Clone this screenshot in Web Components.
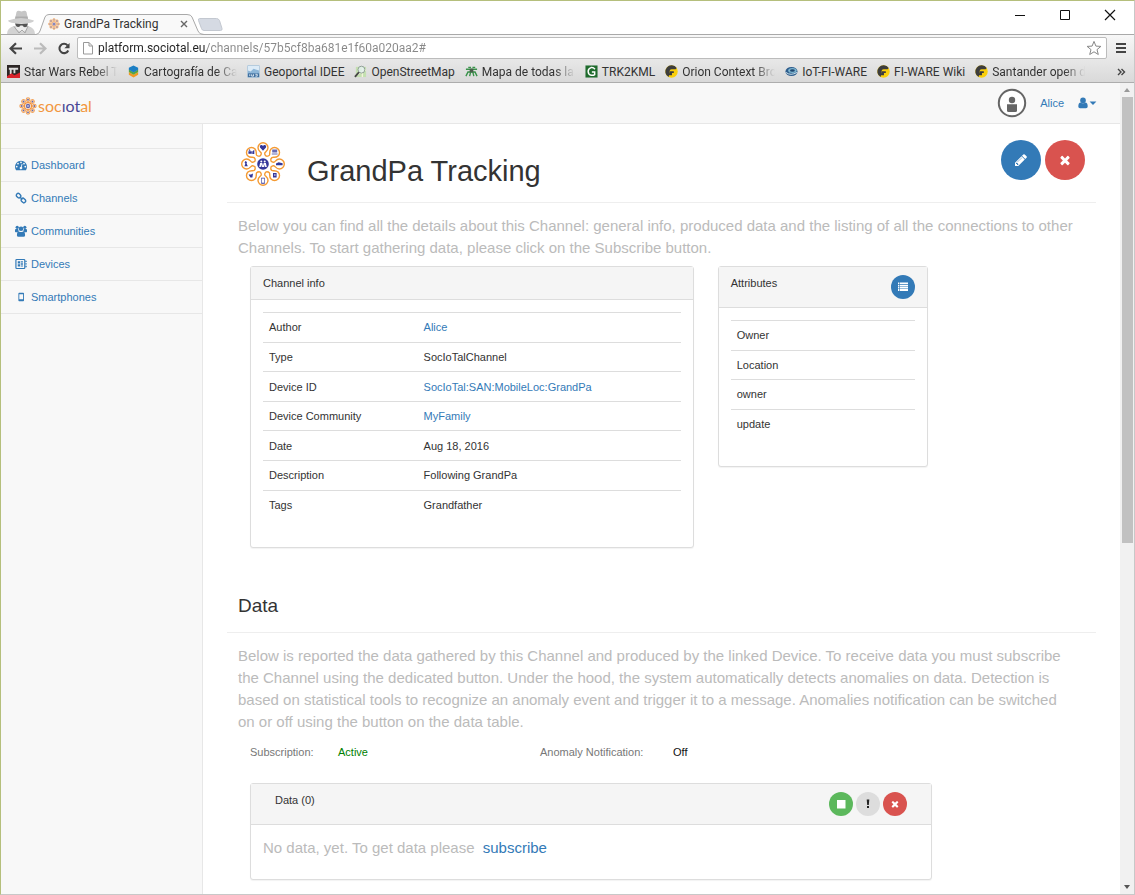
<!DOCTYPE html>
<html lang="en">
<head>
<meta charset="utf-8">
<meta name="viewport" content="width=device-width, initial-scale=1">
<title>GrandPa Tracking</title>
<style>
html, body { margin: 0; height: 100%; }
body { font-family: "Liberation Sans", Arial, sans-serif; font-size: 11px; line-height: 16px; color: #333; background: #fff; }
</style>
</head>
<body>
<browser-window>
  <channel-app></channel-app>
</browser-window>

<script>
const define = (name, html, setup) => {
  const template = document.createElement('template');
  template.innerHTML = html;
  customElements.define(name, class extends HTMLElement {
    constructor() {
      super();
      this.attachShadow({ mode: 'open' });
    }
    connectedCallback() {
      if (this.shadowRoot.childNodes.length) return;
      this.shadowRoot.append(template.content.cloneNode(true));
      if (setup) setup(this, this.shadowRoot);
    }
  });
};

const angles = [0, 45, 90, 135, 180, 225, 270, 315];
const petal = 'M-3.2-7.7C-2.2-8.6-1.500-9.400-1.700-10.800C-2-12.200-5-13.200-5-16.300A5 5 0 0 1 5-16.300C5-13.200 2-12.200 1.700-10.800C1.500-9.400 2.200-8.600 3.200-7.700';

const ICONS = {
  flower: ['-22 -22 44 44', `<g fill="none" stroke="#f49a33" stroke-width="1.400">${angles.map(a => `<path transform="rotate(${a})" d="${petal}"/>`).join('')}</g>
    <g fill="#34379a"><circle r="5.800"/>
    <path d="M0-13.200l-3-3.200q-.8-2 .9-2.600 1.400-.3 2.100 1 .7-1.300 2.100-1 1.700.6.9 2.600z"/>
    <path d="M-14.600-12.800h3.400v2.600h-3.400zM-10.700-12.400l2-1.800v4.200h-2zM-13.400-15l1 1.700h-2z"/>
    <path d="M9.200-14.400h5v3h-5zM8.800-10.600h5.800v1.200H8.800z" fill-opacity=".75"/>
    <path d="M13-.6l2.600-1.200 4 1v2H13z"/>
    <path d="M-17.600-3l1.600 1-.4 1.600 1.200 2.600h-3.400l1-2.400-.8-1z"/>
    <path d="M-14.400 10.400h2.400l2-1-.6 4h-2z"/>
    <path d="M10 9h3.600v4.400H10zM11 10.400v1h1.600v-1z" fill-rule="evenodd"/>
    <path d="M-1.800 13.800h3.600v6h-3.600zM-1.200 14.600v4.200h2.400v-4.200z" fill-rule="evenodd"/></g>
    <g fill="#fff"><circle cx="-1.700" cy="-2.600" r="1"/><circle cx="1.700" cy="-2.600" r="1"/><path d="M-3.800 3l.9-4h2.200L0 2l.7-3h2.200l.9 4H2.200L1.700.6 1.200 3h-2.400L-1.700.6-2.200 3z"/></g>`],
  mini: ['-22 -22 44 44', `<g fill="#fde3c3" stroke="#f2a35b" stroke-width="2.500">${angles.map(a => `<circle transform="rotate(${a})" cy="-15.500" r="4.500"/>`).join('')}</g>
    <circle r="8.500" fill="#fff" stroke="#f2913b" stroke-width="3"/><g fill="#6a66a6"><circle r="5.500"/>${angles.map(a => `<circle transform="rotate(${a})" cy="-15.500" r="2.200"/>`).join('')}</g><path d="M-3 0h6" stroke="#fff" stroke-width="2"/>`],
  dashboard: ['0 0 1792 1792', '<path d="M384 1152q0-53-37.500-90.500t-90.500-37.500-90.500 37.500-37.500 90.500 37.500 90.500 90.500 37.500 90.500-37.500 37.500-90.500zm192-448q0-53-37.500-90.500t-90.500-37.500-90.500 37.500-37.500 90.500 37.500 90.500 90.500 37.500 90.500-37.500 37.500-90.500zm428 481l101-382q6-26-7.500-48.500t-38.500-29.500-48 6.500-30 39.500l-101 382q-60 5-107 43.500t-63 98.500q-20 77 20 146t117 89 146-20 89-117q16-60-6-117t-72-91zm660-33q0-53-37.500-90.500t-90.500-37.500-90.500 37.500-37.500 90.500 37.500 90.500 90.500 37.500 90.500-37.500 37.500-90.500zm-640-640q0-53-37.500-90.500t-90.500-37.500-90.500 37.500-37.500 90.500 37.500 90.500 90.500 37.500 90.500-37.500 37.500-90.500zm448 192q0-53-37.500-90.500t-90.500-37.500-90.500 37.500-37.500 90.500 37.500 90.500 90.500 37.500 90.500-37.500 37.500-90.500zm320 448q0 261-141 483-19 29-54 29h-1402q-35 0-54-29-141-221-141-483 0-182 71-348t191-286 286-191 348-71 348 71 286 191 191 286 71 348z"/>'],
  link: ['0 0 12 12', '<g fill="none" stroke="currentColor" stroke-width="1.400"><rect x="-2.400" y="-1.800" width="4.800" height="3.600" rx="1.600" transform="translate(3.600 3.700) rotate(45)"/><rect x="-2.400" y="-1.800" width="4.800" height="3.600" rx="1.600" transform="translate(8.400 8.500) rotate(45)"/><path d="M4.700 4.800l2.600 2.600"/></g>'],
  users: ['0 0 12 12', '<circle cx="2.200" cy="2.300" r="1.600"/><circle cx="9.800" cy="2.300" r="1.600"/><circle cx="6" cy="3.800" r="2.300"/><path d="M0 6.600V5.200Q0 4.100 .9 4.100H3.100Q3.200 5.500 4 6.300 3 6.400 2.500 7.300H.6Q0 7.300 0 6.600zM12 6.600V5.200Q12 4.100 11.100 4.100H8.900Q8.800 5.500 8 6.300 9 6.400 9.500 7.300H11.400Q12 7.300 12 6.600zM1.900 10.200Q1.900 6.400 3.900 6.400 6 7.800 8.100 6.400 10.100 6.400 10.100 10.200 10.100 11.700 8.500 11.700H3.500Q1.900 11.700 1.900 10.200z"/>'],
  device: ['0 0 13 12', '<rect x="1" y="1.100" width="9.600" height="9.800" rx=".8" fill="none" stroke="currentColor" stroke-width="1.300"/><path d="M11.200 2.400h1.500v1.400h-1.500zM11.200 5.200h1.500v1.400h-1.500zM11.200 8h1.500v1.400h-1.500zM3 3h2.500v2.400H3zM6.200 3h2.400v1.500H6.200zM3 6.200h2.500v2.600H3zM6.200 5.300h2.400v1.600H6.200zM6.200 7.500h2.400v1.300H6.200z"/>'],
  phone: ['0 0 12 12', '<path fill-rule="evenodd" d="M4.200 1.800h4q.8 0 .8.800v6.900q0 .8-.8.800h-4q-.8 0-.8-.8V2.600q0-.8.8-.8zM4.300 3.300v5h3.800v-5z"/>'],
  user: ['0 0 12 12', '<circle cx="6" cy="3.400" r="2.800"/><path d="M1.300 9.400q0-4 2.500-4 2.200 1.700 4.400 0 2.500 0 2.500 4 0 1.800-1.700 1.800H3q-1.700 0-1.700-1.800z"/>'],
  caret: ['0 0 8 8', '<path d="M.6 2.500h6.800L4 6z"/>'],
  avatar: ['0 0 30 30', '<circle cx="15" cy="15" r="13.200" fill="#fff" stroke="currentColor" stroke-width="2"/><circle cx="15" cy="12" r="3.200"/><path d="M10 16.200h10v6.300q0 1.500-1.500 1.500h-7q-1.500 0-1.500-1.500z"/>'],
  pencil: ['0 0 1792 1792', '<path d="M491 1536l91-91-235-235-91 91v107h128v128h107zm523-928q0-22-22-22-10 0-17 7l-542 542q-7 7-7 17 0 22 22 22 10 0 17-7l542-542q7-7 7-17zm-54-192l416 416-832 832h-416v-416zm683 96q0 53-37 90l-166 166-416-416 166-165q36-38 90-38 53 0 91 38l235 234q37 39 37 91z"/>'],
  times: ['0 0 1792 1792', '<path d="M1490 1322q0 40-28 68l-136 136q-28 28-68 28t-68-28l-294-294-294 294q-28 28-68 28t-68-28l-136-136q-28-28-28-68t28-68l294-294-294-294q-28-28-28-68t28-68l136-136q28-28 68-28t68 28l294 294 294-294q28-28 68-28t68 28l136 136q28 28 28 68t-28 68l-294 294 294 294q28 28 28 68z"/>'],
  list: ['0 0 10 10', '<path d="M0 .5h1.400v1.800H0zM2 .5h8v1.800H2zM0 2.900h1.400v1.500H0zM2 2.900h8v1.500H2zM0 5h1.400v1.500H0zM2 5h8v1.500H2zM0 7.100h1.400v1.800H0zM2 7.100h8v1.800H2z"/>'],
  stop: ['0 0 10 10', '<path d="M1 1h8.500v8.500H1z"/>'],
  alert: ['0 0 10 10', '<path d="M3.700.5h2.600L5.800 6H4.200zM4 7h2v2H4z"/>'],
  back: ['0 0 14 12', '<path d="M7 .8L1.600 6 7 11.200M2 6h11" fill="none" stroke="currentColor" stroke-width="2.200"/>'],
  forward: ['0 0 14 12', '<path d="M7 .8L12.400 6 7 11.200M12 6H1" fill="none" stroke="currentColor" stroke-width="2.200"/>'],
  reload: ['0 0 14 14', '<path d="M11.600 9.200A5 5 0 1 1 10.800 3.600" fill="none" stroke="currentColor" stroke-width="2.200"/><path d="M13 1v5.600H7.400z"/>'],
  page: ['0 0 12 14', '<path d="M1.500 1.500h5.500l3.500 3.500v8h-9zM7 1.500V5h3.500" fill="#fff" stroke="currentColor"/>'],
  star: ['0 0 16 16', '<path d="M8 1.400l1.900 4.700 5 .3-3.900 3.200 1.300 4.900L8 11.800l-4.300 2.700L5 9.600 1.100 6.400l5-.3z" fill="none" stroke="currentColor"/>'],
  menu: ['0 0 12 12', '<path d="M1 1h10v2H1zM1 5h10v2H1zM1 9h10v2H1z"/>'],
  close: ['0 0 8 8', '<path d="M1 1l6 6M7 1L1 7" stroke="currentColor" stroke-width="1.400"/>'],
  more: ['0 0 8 8', '<path d="M1 1l3 3-3 3M4.500 1l3 3-3 3" fill="none" stroke="currentColor" stroke-width="1.400"/>'],
  min: ['0 0 12 12', '<path d="M1 6h10v1H1z"/>'],
  max: ['0 0 12 12', '<path d="M1.500 1.500h9v9h-9z" fill="none" stroke="currentColor"/>'],
  quit: ['0 0 12 12', '<path d="M1 1l10 10M11 1L1 11" stroke="currentColor" stroke-width="1.200"/>'],
  up: ['0 0 8 8', '<path d="M1 6l3-4 3 4z"/>'],
  down: ['0 0 8 8', '<path d="M1 2h6L4 6z"/>'],
  spy: ['0 0 30 24', '<path d="M1 24q0-6 7-8h14q7 2 7 8z" fill="#d3d3d3"/><path d="M9 12h13l-1 7q-5 5-11 0z" fill="#ececec"/><path d="M9 9l1.500-7q1-2 5-.6 4-1.600 5 .6L22 9z" fill="#c6c6c6"/><path d="M9.500 6.500h12L22 9H9z" fill="#adadad"/><path d="M2 10.500q13-5 26 0 0 3-13 3T2 10.500z" fill="#cfcfcf"/><path d="M9 13.500q6 .8 13 0l-1 3q-3 1.800-4.500-1h-2q-2 2.800-4.500.6z" fill="#555"/><path d="M8 16.500l5 6.500 3-3 3 3 3-7" fill="none" stroke="#a8a8a8"/>'],
  starwars: ['0 0 14 14', '<path fill="#2c2625" d="M0 0h14v14H0z"/><path d="M2 3h10v2H9v4H7V5H5v5H3V5H2z" fill="#ddd"/><path d="M0 12l5-3 3 2 6-3v6H0z" fill="#d9222b"/>'],
  layers: ['0 0 14 14', '<path d="M2 7.500l5 3 5-3v3l-5 3-5-3z" fill="#f29a22"/><path d="M2 4.800l5 3 5-3v2.700l-5 3-5-3z" fill="#5ca63c"/><path d="M2 3l5-2.500L12 3v2L7 8 2 5z" fill="#1c7fc4"/>'],
  idee: ['0 0 14 14', '<path fill="#8db6d8" d="M.5.5h13v13H.5z"/><path d="M1 1h12v5l-6-2-3 3-3-1z" fill="#dcebf7"/><path d="M1 9h12v4H1z" fill="#3f6e9e"/><path d="M3 10v2M5 10v2h2v-2M9 10h2v2H9" stroke="#dfeaf4" fill="none"/>'],
  osm: ['0 0 14 14', '<path fill="#c4e0b1" d="M2 2h11v11H2z"/><path d="M2 11l11-6M9 13V3" stroke="#f3f4da" stroke-width="1.500"/><circle cx="8" cy="5" r="3.700" fill="#e4f1f0" fill-opacity=".8" stroke="#8b9a92"/><path d="M5.300 7.800L1 12.800" stroke="#444" stroke-width="2"/>'],
  tree: ['0 0 14 14', '<path d="M1 4.500h12M3.500 2.500h3M8 2.500h3M2.500 7.500h9M3 8L1 12M6 8l-1 4M8.500 8l1 4M11 8l2 4" fill="none" stroke="#39934a" stroke-width="1.500"/><path d="M5 4h4v4H5z" fill="#4a5d4b"/>'],
  letterg: ['0 0 14 14', '<path fill="#1f6b2d" d="M.5.5h13v13H.5z"/><path d="M10.700 4.500Q9 2.300 6.500 2.800 3.300 3.700 3.400 7t3.400 4.100q2.100.3 3.600-.8V7.600H7.400" fill="none" stroke="#fff" stroke-width="1.600"/>'],
  fiware: ['0 0 14 14', '<circle cx="7" cy="7" r="6.700" fill="#f9cf0c"/><path d="M4 13A6.700 6.700 0 1 1 12.600 3.300L11.500 4.500H7Q5 4.500 5 6.500z" fill="#3c3c3c"/><path d="M5 6.600h4.500v2H7.500V11H4z" fill="#3c3c3c"/>'],
  iot: ['0 0 14 14', '<ellipse cx="7" cy="7" rx="6.500" ry="4.800" fill="#2d5c8c"/><ellipse cx="8" cy="6" rx="4.600" ry="2.700" fill="#7db5d0"/><ellipse cx="8" cy="6" rx="2.600" ry="1.300" fill="#1e466f"/><path d="M1 8q5 4 12 0" stroke="#d8ebf2" fill="none"/>']
};

define('ui-icon', `<style>
  :host { display: inline-block; width: 12px; height: 12px; flex: none; }
  svg { display: block; width: 100%; height: 100%; fill: currentColor; overflow: visible; }
</style>`, (host, root) => {
  const [box, body] = ICONS[host.getAttribute('name')];
  root.innerHTML += `<svg viewBox="${box}" aria-hidden="true">${body}</svg>`;
});

/* Browser frame */
define('browser-tab', `<style>
  :host { display: flex; position: relative; align-items: center; box-sizing: border-box; width: 168px; height: 20px; padding: 0 16px 0 12px; gap: 4px; }
  svg.shape { position: absolute; inset: 0; width: 100%; height: 21px; }
  ui-icon { position: relative; width: 12px; height: 12px; }
  .title { position: relative; flex: 1; white-space: nowrap; color: #333; }
  button { position: relative; border: 0; padding: 0; background: none; color: #666; width: 8px; height: 8px; display: flex; }
  button ui-icon { width: 8px; height: 8px; }
</style>
<svg class="shape" viewBox="0 0 168 21" preserveAspectRatio="none" aria-hidden="true"><path d="M0 20.500Q3 20 4 17L9 3Q10 .5 13 .5H151Q155 .5 156 3L162 17Q163 20.500 168 20.500" fill="#f9f9f9" stroke="#a9a9a9"/></svg>
<ui-icon name="mini"></ui-icon><span class="title"><slot></slot></span><button aria-label="Close tab"><ui-icon name="close"></ui-icon></button>`);

define('book-mark', `<style>
  :host { display: flex; flex: none; }
  a { display: flex; align-items: center; gap: 4px; color: #333; text-decoration: none; white-space: nowrap; }
  ui-icon { width: 13px; height: 13px; }
  :host([cut]) span { width: 93px; overflow: hidden; -webkit-mask-image: linear-gradient(to right, #000 72px, transparent 93px); mask-image: linear-gradient(to right, #000 72px, transparent 93px); }
</style><a href="#"><span><slot></slot></span></a>`, (host, root) => {
  const icon = document.createElement('ui-icon');
  icon.setAttribute('name', host.getAttribute('icon'));
  root.querySelector('a').prepend(icon);
});

define('scroll-rail', `<style>
  :host { display: flex; flex-direction: column; align-items: center; flex: none; width: 14px; background: #f1f1f1; color: #999; }
  ui-icon { width: 8px; height: 8px; margin: 3px 0; }
  .track { flex: 1; width: 11px; }
  .thumb { height: 57%; background: #c1c1c1; }
  .end { color: #555; }
</style><ui-icon name="up"></ui-icon><div class="track"><div class="thumb"></div></div><ui-icon name="down" class="end"></ui-icon>`);

define('browser-window', `<style>
  :host { display: flex; flex-direction: column; box-sizing: border-box; height: 100vh; border: 1px solid #c8c8c8; border-top-color: #b5bf7c; border-left-color: #b5bf7c; overflow: hidden; }
  button { border: 0; padding: 0; background: none; display: flex; color: #444; }
  .chrome { font-family: Roboto, "Open Sans", sans-serif; font-size: 12px; line-height: 18px; flex: none; }
  .strip { display: flex; align-items: flex-end; height: 33px; border-bottom: 1px solid #a9a9a9; padding-left: 5px; }
  .strip > ui-icon { width: 30px; height: 24px; }
  browser-tab { z-index: 1; }
  .newtab { width: 26px; height: 13px; margin: 0 0 3px -7px; }
  .newtab svg { width: 100%; height: 100%; }
  .controls { margin-left: auto; align-self: flex-start; display: flex; gap: 33px; padding: 8px 18px 0 0; }
  .controls button { color: #111; }
  .bars { background: linear-gradient(#f7f7f7, #d9d9d9); border-bottom: 1px solid #adadad; }
  .tools { display: flex; align-items: center; gap: 10px; height: 26px; padding: 0 7px 0 8px; }
  .tools > button ui-icon { width: 14px; height: 13px; }
  .tools > button:last-child ui-icon { width: 12px; height: 12px; }
  .tools > .off { color: #bbb; }
  .address { flex: 1; display: flex; align-items: center; gap: 4px; box-sizing: border-box; height: 22px; padding: 0 4px; margin: 0 -2px 0 -4px; background: #fff; border: 1px solid #bcbcbc; border-radius: 2px; }
  .address ui-icon { color: #999; width: 12px; height: 14px; }
  .address button ui-icon { width: 16px; height: 16px; color: #888; }
  input { flex: 1; min-width: 0; border: 0; padding: 0; outline: 0; font: inherit; color: #333; background: linear-gradient(to right, #222 109px, #888 109px); -webkit-background-clip: text; background-clip: text; -webkit-text-fill-color: transparent; }
  .marks { display: flex; align-items: center; gap: 10px; height: 21px; padding: 0 9px 0 6px; }
  .marks button { margin-left: auto; }
  .marks button ui-icon { width: 8px; height: 8px; }
  .view { flex: 1; min-height: 0; display: flex; }
  slot { display: block; flex: 1; min-width: 0; overflow: hidden; }
</style>
<div class="chrome">
  <div class="strip"><ui-icon name="spy"></ui-icon><browser-tab>GrandPa Tracking</browser-tab>
    <button class="newtab" aria-label="New tab"><svg viewBox="0 0 26 13" aria-hidden="true"><path d="M2.500.5h17q2 0 3 2l2.500 8q.5 2-1.500 2H7q-2 0-2.500-2L1.500 2.500q-.5-2 1-2z" fill="#d5dae3" stroke="#c3c8d0"/></svg></button>
    <div class="controls"><button aria-label="Minimize"><ui-icon name="min"></ui-icon></button><button aria-label="Maximize"><ui-icon name="max"></ui-icon></button><button aria-label="Close"><ui-icon name="quit"></ui-icon></button></div>
  </div>
  <div class="bars">
    <div class="tools">
      <button aria-label="Back"><ui-icon name="back"></ui-icon></button>
      <button aria-label="Forward" class="off"><ui-icon name="forward"></ui-icon></button>
      <button aria-label="Reload"><ui-icon name="reload"></ui-icon></button>
      <div class="address"><ui-icon name="page"></ui-icon><input type="text" aria-label="Address" value="platform.sociotal.eu/channels/57b5cf8ba681e1f60a020aa2#"><button aria-label="Bookmark this page"><ui-icon name="star"></ui-icon></button></div>
      <button aria-label="Menu"><ui-icon name="menu"></ui-icon></button>
    </div>
    <nav class="marks" aria-label="Bookmarks">
      <book-mark icon="starwars" cut>Star Wars Rebel Te</book-mark>
      <book-mark icon="layers" cut>Cartografía de Ca</book-mark>
      <book-mark icon="idee">Geoportal IDEE</book-mark>
      <book-mark icon="osm">OpenStreetMap</book-mark>
      <book-mark icon="tree" cut>Mapa de todas la</book-mark>
      <book-mark icon="letterg">TRK2KML</book-mark>
      <book-mark icon="fiware" cut>Orion Context Bro</book-mark>
      <book-mark icon="iot">IoT-FI-WARE</book-mark>
      <book-mark icon="fiware">FI-WARE Wiki</book-mark>
      <book-mark icon="fiware" cut>Santander open d</book-mark>
      <button aria-label="More bookmarks"><ui-icon name="more"></ui-icon></button>
    </nav>
  </div>
</div>
<div class="view"><slot></slot><scroll-rail></scroll-rail></div>`);

/* Site */
define('site-header', `<style>
  :host { display: flex; align-items: center; justify-content: space-between; height: 40px; padding: 0 23px 0 18px; background: #f8f8f8; border-bottom: 1px solid #e7e7e7; }
  a { color: #337ab7; text-decoration: none; }
  .brand { display: flex; align-items: center; gap: 1px; margin-top: 6px; font: 16px/18px Lato, sans-serif; color: #f2973f; }
  .brand ui-icon { width: 18px; height: 18px; }
  b { font-weight: 400; color: #4a4794; }
  .user { display: flex; align-items: center; }
  .user > ui-icon { width: 30px; height: 30px; color: #666; margin-right: 13px; }
  button { display: flex; align-items: center; border: 0; padding: 0; margin-left: 13px; background: none; color: #337ab7; }
  button ui-icon + ui-icon { width: 8px; height: 8px; }
</style>
<a class="brand" href="#"><ui-icon name="mini"></ui-icon><span>soc<b>ıot</b>al</span></a>
<div class="user"><ui-icon name="avatar"></ui-icon><a href="#">Alice</a><button aria-label="Account menu"><ui-icon name="user"></ui-icon><ui-icon name="caret"></ui-icon></button></div>`);

define('side-nav', `<style>
  :host { display: block; flex: none; box-sizing: border-box; width: 202px; background: #f8f8f8; border-right: 1px solid #e7e7e7; padding-top: 24px; }
  ul { list-style: none; margin: 0; padding: 0; border-top: 1px solid #e7e7e7; }
  li { border-bottom: 1px solid #e7e7e7; }
  a { display: flex; align-items: center; gap: 4px; height: 32px; padding-left: 14px; color: #337ab7; text-decoration: none; }
</style>
<nav><ul>
  <li><a href="#"><ui-icon name="dashboard"></ui-icon>Dashboard</a></li>
  <li><a href="#"><ui-icon name="link"></ui-icon>Channels</a></li>
  <li><a href="#"><ui-icon name="users"></ui-icon>Communities</a></li>
  <li><a href="#"><ui-icon name="device"></ui-icon>Devices</a></li>
  <li><a href="#"><ui-icon name="phone"></ui-icon>Smartphones</a></li>
</ul></nav>`);

define('round-button', `<style>
  :host { display: block; --size: 24px; --glyph: 10px; --tone: #337ab7; }
  :host([large]) { --size: 40px; --glyph: 14px; }
  :host([tone=danger]) { --tone: #d9534f; }
  :host([tone=success]) { --tone: #5cb85c; }
  :host([tone=muted]) { --tone: #ddd; }
  button { display: flex; align-items: center; justify-content: center; width: var(--size); height: var(--size); border: 0; padding: 0; border-radius: 50%; background: var(--tone); color: #fff; }
  :host([tone=muted]) button { color: #222; }
  ui-icon { width: var(--glyph); height: var(--glyph); }
</style><button></button>`, (host, root) => {
  const button = root.querySelector('button');
  button.setAttribute('aria-label', host.getAttribute('label'));
  button.innerHTML = `<ui-icon name="${host.getAttribute('icon')}"></ui-icon>`;
});

define('info-panel', `<style>
  :host { display: block; border: 1px solid #ddd; border-radius: 3px; box-shadow: 0 1px 1px rgba(0,0,0,.05); background: #fff; }
  header { display: flex; justify-content: space-between; align-items: flex-start; padding: 8px 12px; background: #f5f5f5; border-bottom: 1px solid #ddd; }
  :host([indent]) header { padding: 8px 24px; }
  h3 { margin: 0; font: inherit; }
  .tools { display: flex; gap: 3px; }
  .body { padding: 12px; }
</style>
<header><h3><slot name="title"></slot></h3><div class="tools"><slot name="tools"></slot></div></header>
<div class="body"><slot></slot></div>`);

define('channel-app', `<style>
  :host { display: block; height: 100%; }
  .columns { display: flex; min-height: calc(100% - 41px); }
  main { flex: 1; min-width: 0; padding: 0 24px; }
  a { color: #337ab7; text-decoration: none; }
  .head { display: flex; align-items: flex-start; box-sizing: border-box; height: 79px; padding: 16px 11px 0 14px; border-bottom: 1px solid #eee; }
  .head > ui-icon { width: 44px; height: 44px; margin-top: 2px; }
  h1 { flex: 1; margin: 14px 0 0 22px; font-size: 29px; line-height: 34px; font-weight: 400; }
  .actions { display: flex; gap: 4px; }
  .lead { margin: 12px 20px 0 11px; font-size: 15px; line-height: 22px; color: #bbb; }
  .panels { display: grid; grid-template-columns: minmax(0, 2fr) minmax(0, 1fr); align-items: start; width: 82%; margin-top: 7px; padding-left: 11px; box-sizing: border-box; }
  .panels > * { padding: 0 12px; }
  table { width: 100%; border-collapse: collapse; margin-bottom: 16px; }
  .info { height: 207px; }
  .attrs { height: 118px; }
  th, td { padding: 0 6px; border-top: 1px solid #ddd; text-align: left; font-weight: 400; }
  th { width: 37%; box-sizing: border-box; }
  h2 { margin: 48px 0 0; padding: 0 11px 16px; font-size: 19px; line-height: 20px; font-weight: 400; border-bottom: 1px solid #eee; }
  .status { display: grid; grid-template-columns: 88px 202px 133px 1fr; margin: 11px 0 23px 23px; color: #777; }
  .status dt, .status dd { margin: 0; }
  .on { color: #008000; }
  .no { color: #111; }
  .data { margin: 0 164px 0 23px; }
  .data .lead { margin: 0 0 8px; }
  .data .lead a { margin-left: 4px; }
</style>
<site-header></site-header>
<div class="columns">
  <side-nav></side-nav>
  <main>
    <div class="head"><ui-icon name="flower"></ui-icon><h1>GrandPa Tracking</h1>
      <div class="actions"><round-button large icon="pencil" label="Edit channel"></round-button><round-button large tone="danger" icon="times" label="Delete channel"></round-button></div></div>
    <p class="lead">Below you can find all the details about this Channel: general info, produced data and the listing of all the connections to other Channels. To start gathering data, please click on the Subscribe button.</p>
    <div class="panels">
      <div><info-panel><span slot="title">Channel info</span>
        <table class="info">
          <tr><th scope="row">Author</th><td><a href="#">Alice</a></td></tr>
          <tr><th scope="row">Type</th><td>SocIoTalChannel</td></tr>
          <tr><th scope="row">Device ID</th><td><a href="#">SocIoTal:SAN:MobileLoc:GrandPa</a></td></tr>
          <tr><th scope="row">Device Community</th><td><a href="#">MyFamily</a></td></tr>
          <tr><th scope="row">Date</th><td>Aug 18, 2016</td></tr>
          <tr><th scope="row">Description</th><td>Following GrandPa</td></tr>
          <tr><th scope="row">Tags</th><td>Grandfather</td></tr>
        </table></info-panel></div>
      <div><info-panel><span slot="title">Attributes</span><round-button slot="tools" icon="list" label="List attributes"></round-button>
        <table class="attrs">
          <tr><td>Owner</td></tr><tr><td>Location</td></tr><tr><td>owner</td></tr><tr><td>update</td></tr>
        </table></info-panel></div>
    </div>
    <h2>Data</h2>
    <p class="lead">Below is reported the data gathered by this Channel and produced by the linked Device. To receive data you must subscribe the Channel using the dedicated button. Under the hood, the system automatically detects anomalies on data. Detection is based on statistical tools to recognize an anomaly event and trigger it to a message. Anomalies notification can be switched on or off using the button on the data table.</p>
    <dl class="status"><dt>Subscription:</dt><dd class="on">Active</dd><dt>Anomaly Notification:</dt><dd class="no">Off</dd></dl>
    <info-panel class="data" indent><span slot="title">Data (0)</span>
      <round-button slot="tools" tone="success" icon="stop" label="Unsubscribe"></round-button>
      <round-button slot="tools" tone="muted" icon="alert" label="Toggle anomaly notification"></round-button>
      <round-button slot="tools" tone="danger" icon="times" label="Clear data"></round-button>
      <p class="lead">No data, yet. To get data please <a href="#">subscribe</a></p>
    </info-panel>
  </main>
</div>`);
</script>
</body>
</html>
